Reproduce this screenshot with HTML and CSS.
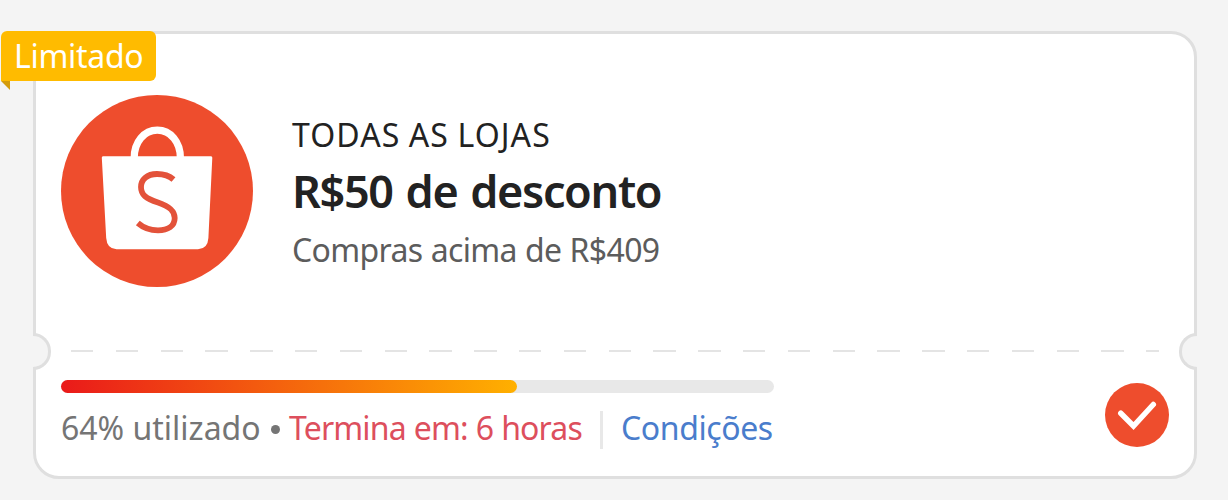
FILE: index.html
```html
<!DOCTYPE html>
<html lang="pt-BR">

<head>
    <meta charset="UTF-8">
    <meta name="viewport" content="width=device-width, initial-scale=1.0">
    <title>Cupom</title>
    <link rel="stylesheet" href="styles.css">
</head>

<body>
    <div class="coupon">
        <div class="tag">Limitado</div>
        <div class="notch notch-left"></div>
        <div class="notch notch-right"></div>

        <div class="offer">
            <svg class="logo" viewBox="0 0 192 192">
                <circle cx="96" cy="96" r="96" fill="#ee4d2d"></circle>
                <path d="M73.2,63 C73.2,47 83,35.2 96.3,35.2 C109.6,35.2 119.4,47 119.4,63" stroke="#fff"
                    stroke-width="7.2" fill="none"></path>
                <path d="M42,61.3 H150 Q151.4,61.3 151.3,62.8 L147.4,143 Q146.7,154 137,154.2 H55.5 Q46,154 45.2,143 L40.8,62.8 Q40.7,61.3 42,61.3 Z"
                    fill="#fff"></path>
                <path d="M112.5,84.5 C108,80.5 102,79 96,79 C86,79 80,84.5 80,92 C80,100 85,103.5 97,107.5 C109,111.5 113.7,116 113.7,123 C113.7,131 107,135.3 97,135.3 C89,135.3 82,132.5 76.8,128"
                    stroke="#e3523a" stroke-width="5.8" fill="none"></path>
            </svg>
            <div class="details">
                <div class="store">TODAS AS LOJAS</div>
                <div class="discount">R$50 de desconto</div>
                <div class="minimum">Compras acima de R$409</div>
            </div>
        </div>

        <div class="divider"></div>

        <div class="footer">
            <div class="usage">
                <div class="bar">
                    <div class="bar-fill" style="width: 64%"></div>
                </div>
                <div class="info">
                    <span class="used">64% utilizado</span>
                    <span class="dot"></span>
                    <span class="ends">Termina em: 6 horas</span>
                    <span class="separator"></span>
                    <span class="terms">Condições</span>
                </div>
            </div>
            <svg class="check" viewBox="0 0 64 64">
                <circle cx="32" cy="32" r="32" fill="#ee4d2d"></circle>
                <path d="M15.8,30.2 L28.5,43 L48.3,21.5" stroke="#fff" stroke-width="5.5" stroke-linecap="round"
                    fill="none"></path>
            </svg>
        </div>
    </div>
</body>

</html>
```

FILE: styles.css
```css
* {
    box-sizing: border-box;
}

html,
body {
    margin: 0;
    padding: 0;
    overflow: hidden;
    background: #f4f4f4;
    font-family: "Noto Sans", sans-serif;
    font-size: 32px;
    white-space: nowrap;
}

.coupon {
    position: relative;
    width: 1164px;
    height: 448px;
    margin: 31px 0 0 33px;
    padding: 0 25px;
    background: #fff;
    border: 3px solid #dfdfdf;
    border-radius: 26px;
}

.tag {
    position: absolute;
    top: -3px;
    left: -35px;
    width: 155px;
    height: 50px;
    padding-left: 13px;
    border-radius: 6px 6px 6px 0;
    background: #ffbb00;
    color: #fff;
    line-height: 50px;
    letter-spacing: -0.3px;
}

/* folded corner below the tag */
.tag::after {
    content: "";
    position: absolute;
    top: 100%;
    left: 0;
    border-top: 9px solid #d49c0c;
    border-left: 9px solid transparent;
}

.notch {
    position: absolute;
    top: 299px;
    width: 18px;
    height: 37px;
    border: 3px solid #dfdfdf;
    background: #f4f4f4;
}

.notch-left {
    left: -3px;
    border-left: 0;
    border-radius: 0 19px 19px 0;
}

.notch-right {
    right: -3px;
    border-right: 0;
    border-radius: 19px 0 0 19px;
}

.offer {
    display: flex;
    height: 316px;
    padding-top: 61px;
}

.logo {
    width: 192px;
    height: 192px;
    margin-right: 39px;
}

.details {
    padding-top: 17px;
}

.store {
    height: 46px;
    line-height: 46px;
    color: #222;
    letter-spacing: 1.1px;
    word-spacing: -1px;
}

.discount {
    height: 69px;
    line-height: 66px;
    color: #222;
    font-size: 45px;
    font-weight: 600;
    letter-spacing: -1.35px;
    word-spacing: 2.5px;
}

.minimum {
    line-height: 46px;
    color: #5c5c5c;
    letter-spacing: -0.65px;
    word-spacing: 0.5px;
}

.divider {
    height: 2px;
    margin: 0 10px;
    background: repeating-linear-gradient(90deg, #e4e4e4 0 22.4px, transparent 22.4px 44.8px);
}

.footer {
    display: flex;
    justify-content: space-between;
    padding-top: 27px;
}

.usage {
    width: 713px;
}

.bar {
    height: 13px;
    margin-top: 1px;
    border-radius: 7px;
    background: #e8e8e8;
}

.bar-fill {
    height: 100%;
    border-radius: 7px;
    background: linear-gradient(90deg, #ea1a1a, #ffb000);
}

.info {
    display: flex;
    align-items: center;
    height: 46px;
    margin-top: 11px;
}

.used {
    width: 211px;
    color: #757575;
}

.dot {
    width: 9px;
    height: 9px;
    margin: 5px 9px 0 -1px;
    border-radius: 50%;
    background: #757575;
}

.ends {
    width: 311px;
    color: #dd4f5d;
    letter-spacing: -0.85px;
    word-spacing: 0.5px;
}

.separator {
    width: 3px;
    height: 38px;
    margin: 5px 18px 0 0;
    background: #e8e8e8;
}

.terms {
    color: #4a7dcc;
    letter-spacing: -0.4px;
}

.check {
    width: 64px;
    height: 64px;
    margin-top: 4px;
}
```
